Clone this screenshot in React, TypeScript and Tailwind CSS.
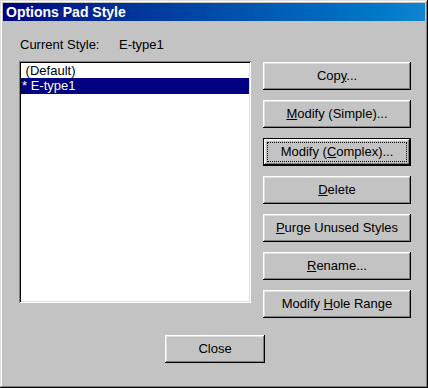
import React from "react";

const raised =
  "shadow-[inset_-1px_-1px_#000,inset_1px_1px_#fff,inset_-2px_-2px_#808080,inset_2px_2px_#dfdfdf]";

function Btn({
  children,
  isDefault = false,
  className = "",
}: {
  children: React.ReactNode;
  isDefault?: boolean;
  className?: string;
}) {
  return (
    <div
      className={`h-[28px] bg-[#c3c3c3] text-[13px] text-black ${
        isDefault ? "border border-black" : ""
      } ${className}`}
    >
      <div className={`h-full w-full ${raised} ${isDefault ? "p-[3px]" : "p-[4px]"}`}>
        <div
          className={`flex h-full w-full items-center justify-center border border-dotted ${
            isDefault ? "border-black" : "border-transparent"
          }`}
        >
          {children}
        </div>
      </div>
    </div>
  );
}

export default function App() {
  return (
    <div
      className="flex h-[388px] w-[428px] flex-col bg-[#c3c3c3] p-[3px] shadow-[inset_-1px_-1px_#000,inset_1px_1px_#dfdfdf,inset_-2px_-2px_#808080,inset_2px_2px_#fff]"
      style={{ fontFamily: '"Liberation Sans", Arial, sans-serif' }}
    >
      <div className="flex h-[18px] items-center bg-gradient-to-r from-[#000080] to-[#1084d0] pl-[3px]">
        <span className="text-[14px] font-bold leading-none text-white">Options Pad Style</span>
      </div>

      <div className="flex pl-[16px] pt-[16px]">
        <div className="flex w-[232px] flex-col">
          <div className="flex h-[16px] items-center text-[13px] leading-[16px] text-black">
            <span className="w-[100px] pl-[1px]">Current Style:</span>
            <span>E-type1</span>
          </div>
          <div className="mt-[8px] h-[242px] bg-white p-[2px] shadow-[inset_1px_1px_#808080,inset_-1px_-1px_#fff,inset_2px_2px_#000,inset_-2px_-2px_#dfdfdf]">
            <div className="flex h-[15px] items-center whitespace-pre pl-[1px] text-[13px] leading-[15px] text-black">
              {" (Default)"}
            </div>
            <div className="flex h-[16px] items-center whitespace-pre bg-[#000080] pl-[1px] text-[13px] leading-[16px] text-white">
              {"* E-type1"}
            </div>
          </div>
        </div>

        <div className="ml-[12px] mt-[25px] flex w-[148px] flex-col gap-[10px]">
          <Btn>
            <span>
              Cop<u className="underline-offset-1">y</u>...
            </span>
          </Btn>
          <Btn>
            <span>
              <u className="underline-offset-1">M</u>odify (Simple)...
            </span>
          </Btn>
          <Btn isDefault>
            <span>
              Modify (<u className="underline-offset-1">C</u>omplex)...
            </span>
          </Btn>
          <Btn>
            <span>
              <u className="underline-offset-1">D</u>elete
            </span>
          </Btn>
          <Btn>
            <span>
              <u className="underline-offset-1">P</u>urge Unused Styles
            </span>
          </Btn>
          <Btn>
            <span>
              <u className="underline-offset-1">R</u>ename...
            </span>
          </Btn>
          <Btn>
            <span>
              Modify <u className="underline-offset-1">H</u>ole Range
            </span>
          </Btn>
        </div>
      </div>

      <div className="mt-[17px] flex justify-center pl-[2px]">
        <Btn className="w-[100px]">
          <span>Close</span>
        </Btn>
      </div>
    </div>
  );
}
